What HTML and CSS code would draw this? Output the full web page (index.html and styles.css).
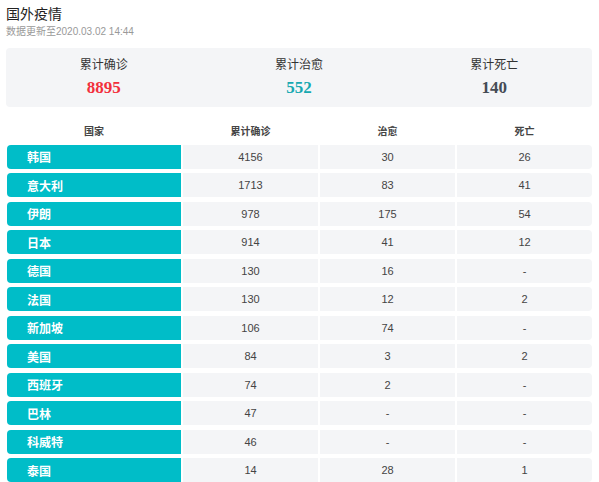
FILE: index.html
```html
<!DOCTYPE html>
<html>
  <head>
    <meta charset="utf-8" />
    <title>国外疫情</title>
    <link rel="stylesheet" href="styles.css">
  </head>
  <body>
    <div id="main">
      <div class="title">国外疫情</div>
      <div class="updated">数据更新至2020.03.02 14:44</div>
      <div class="summary">
        <div class="stat">
          <span class="label">累计确诊</span>
          <span class="num confirmed">8895</span>
        </div>
        <div class="stat">
          <span class="label">累计治愈</span>
          <span class="num cured">552</span>
        </div>
        <div class="stat">
          <span class="label">累计死亡</span>
          <span class="num dead">140</span>
        </div>
      </div>
      <div class="table">
        <div class="row head">
          <span>国家</span>
          <span>累计确诊</span>
          <span>治愈</span>
          <span>死亡</span>
        </div>
        <div class="row"><span class="country">韩国</span><span>4156</span><span>30</span><span>26</span></div>
        <div class="row"><span class="country">意大利</span><span>1713</span><span>83</span><span>41</span></div>
        <div class="row"><span class="country">伊朗</span><span>978</span><span>175</span><span>54</span></div>
        <div class="row"><span class="country">日本</span><span>914</span><span>41</span><span>12</span></div>
        <div class="row"><span class="country">德国</span><span>130</span><span>16</span><span>-</span></div>
        <div class="row"><span class="country">法国</span><span>130</span><span>12</span><span>2</span></div>
        <div class="row"><span class="country">新加坡</span><span>106</span><span>74</span><span>-</span></div>
        <div class="row"><span class="country">美国</span><span>84</span><span>3</span><span>2</span></div>
        <div class="row"><span class="country">西班牙</span><span>74</span><span>2</span><span>-</span></div>
        <div class="row"><span class="country">巴林</span><span>47</span><span>-</span><span>-</span></div>
        <div class="row"><span class="country">科威特</span><span>46</span><span>-</span><span>-</span></div>
        <div class="row"><span class="country">泰国</span><span>14</span><span>28</span><span>1</span></div>
      </div>
    </div>
  </body>
</html>
```

FILE: styles.css
```css
*{
  box-sizing: border-box;
  font-family: "Liberation Sans", "Noto Sans CJK SC", sans-serif;
}
body{
  margin: 0;
  background-color: white;
  color: #333;
}
#main{
  padding: 4px 7px 0 6px;
}
.title{
  font-size: 14px;
  line-height: 20px;
  color: #222;
}
.updated{
  font-size: 10px;
  line-height: 15px;
  color: #999;
}
.summary{
  margin-top: 9px;
  display: grid;
  grid-template-columns: 1fr 1fr 1fr;
  background-color: #f4f5f7;
  border-radius: 4px;
  padding: 9px 0 8px;
}
.stat{
  display: grid;
  justify-items: center;
  row-gap: 4px;
}
.label{
  font-size: 12px;
  line-height: 16px;
  color: #333;
}
.num{
  font-family: "Liberation Serif", serif;
  font-weight: bold;
  font-size: 17px;
  line-height: 22px;
}
.confirmed{
  color: #f2303c;
}
.cured{
  color: #17a9b1;
}
.dead{
  color: #444b55;
}
.table{
  margin: 14px 0 0 1px;
  display: grid;
  row-gap: 4.5px;
}
.row{
  display: grid;
  grid-template-columns: 174px 135px 135px 135px;
  column-gap: 2px;
  height: 24px;
}
.row span{
  display: grid;
  place-items: center;
  font-size: 11px;
  background-color: #f4f5f7;
  color: #444;
}
.row span:last-child{
  border-radius: 0 4px 4px 0;
}
.row .country{
  place-items: center start;
  padding-left: 20px;
  background-color: #00bdc8;
  color: white;
  font-weight: bold;
  font-size: 12px;
  border-radius: 4px 0 0 4px;
}
.row.head{
  height: 19px;
}
.row.head span{
  background-color: transparent;
  font-size: 10px;
  font-weight: bold;
  color: #444;
}
```
